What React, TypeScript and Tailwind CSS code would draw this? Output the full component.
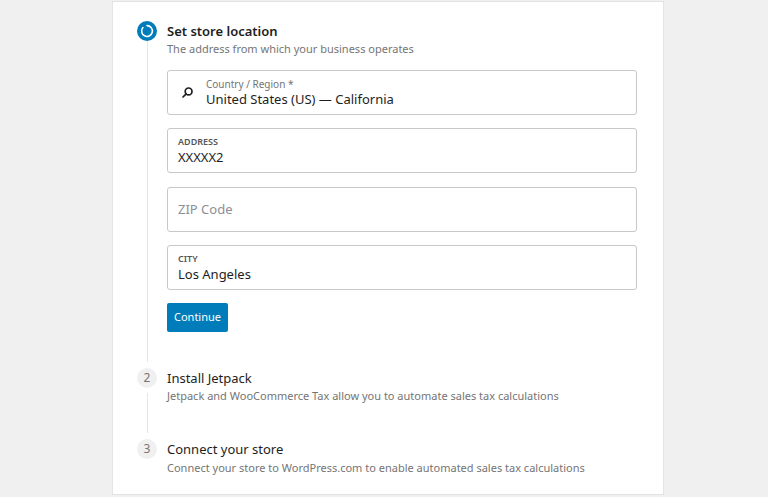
const Spinner = () => (
  <svg width="20" height="20" viewBox="0 0 20 20">
    <circle cx="10" cy="10" r="10" fill="#007cba" />
    {/* white ring with a small gap at the top-left */}
    <path d="M10 4.6 A5.4 5.4 0 1 1 5.9 6.5" fill="none" stroke="#fff" strokeWidth="1.6" strokeLinecap="round" />
  </svg>
);

const SearchIcon = () => (
  <svg width="13" height="13" viewBox="0 0 13 13" fill="none" stroke="#1e1e1e" strokeWidth="1.7" strokeLinecap="round">
    <circle cx="7.6" cy="5.4" r="3.4" />
    <path d="M5.2 7.8 L2 11" />
  </svg>
);

const StepNumber = ({ n }: { n: number }) => (
  <div className="w-[20px] h-[20px] rounded-full bg-[#f0f0f0] text-[#757575] text-[12px] leading-[20px] text-center">
    {n}
  </div>
);

const App = () => {
  return (
    <div
      className="w-[768px] h-[497px] bg-[#f0f0f0] pt-[1px] overflow-hidden"
      style={{ fontFamily: '"Noto Sans", "Open Sans", sans-serif' }}
    >
      <div className="ml-[112px] w-[552px] h-[494px] bg-white border border-[#e4e4e4] pl-[24px] pt-[19px]">
        {/* Step 1 */}
        <div className="flex">
          <div className="w-[20px] flex flex-col items-center">
            <Spinner />
            <div className="w-px flex-1 bg-[#e6e6e6] mb-[6px]" />
          </div>
          <div className="ml-[10px] pb-[36px]">
            <div className="text-[13px] leading-[20px] font-semibold text-[#1e1e1e]">Set store location</div>
            <div className="text-[11px] leading-[16px] text-[#757575]">The address from which your business operates</div>

            <div className="mt-[13px] w-[470px] h-[45px] border border-[#c8c8c8] rounded-[3px] flex items-center">
              <div className="w-[38px] flex justify-center pl-[1px]">
                <SearchIcon />
              </div>
              <div className="flex flex-col">
                <span className="text-[10px] leading-[12px] text-[#757575]">Country / Region *</span>
                <span className="text-[13px] leading-[18px] text-[#1e1e1e]">United States (US) — California</span>
              </div>
            </div>

            <div className="mt-[13px] w-[470px] h-[45px] border border-[#c8c8c8] rounded-[3px] flex flex-col justify-center px-[10px]">
              <span className="text-[9px] leading-[12px] uppercase font-semibold text-[#555]">Address</span>
              <span className="text-[13px] leading-[18px] text-[#1e1e1e]">XXXXX2</span>
            </div>

            <div className="mt-[14px] w-[470px] h-[45px] border border-[#c8c8c8] rounded-[3px] flex items-center px-[10px]">
              <span className="text-[13px] text-[#8c8f94]">ZIP Code</span>
            </div>

            <div className="mt-[13px] w-[470px] h-[45px] border border-[#c8c8c8] rounded-[3px] flex flex-col justify-center px-[10px]">
              <span className="text-[9px] leading-[12px] uppercase font-semibold text-[#555]">City</span>
              <span className="text-[13px] leading-[18px] text-[#1e1e1e]">Los Angeles</span>
            </div>

            <button className="mt-[13px] h-[29px] w-[61px] bg-[#007cba] rounded-[2px] text-white text-[11px]">
              Continue
            </button>
          </div>
        </div>

        {/* Step 2 */}
        <div className="flex">
          <div className="w-[20px] flex flex-col items-center">
            <StepNumber n={2} />
            <div className="w-px flex-1 bg-[#e6e6e6] mt-[5px] mb-[6px]" />
          </div>
          <div className="ml-[10px] pb-[35px]">
            <div className="text-[13px] leading-[20px] text-[#1e1e1e]">Install Jetpack</div>
            <div className="text-[11px] leading-[16px] text-[#757575]">
              Jetpack and WooCommerce Tax allow you to automate sales tax calculations
            </div>
          </div>
        </div>

        {/* Step 3 */}
        <div className="flex">
          <div className="w-[20px] flex flex-col items-center">
            <StepNumber n={3} />
          </div>
          <div className="ml-[10px]">
            <div className="text-[13px] leading-[20px] text-[#1e1e1e]">Connect your store</div>
            <div className="text-[11px] leading-[18px] text-[#757575]">
              Connect your store to WordPress.com to enable automated sales tax calculations
            </div>
          </div>
        </div>
      </div>
    </div>
  );
};

export default App;
